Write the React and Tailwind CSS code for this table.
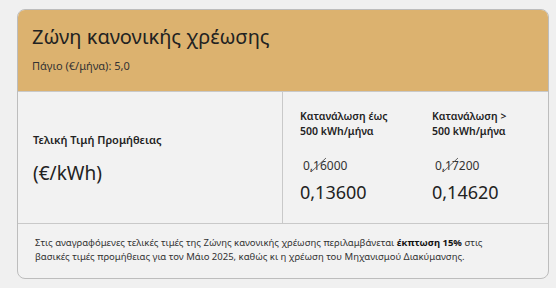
import React from 'react';

const font = { fontFamily: '"Noto Sans", "Open Sans", sans-serif' };

function OldPrice({ value }) {
  return (
    <div className="relative inline-block pl-[3px] text-[12px] text-[#333]">
      {value}
      {/* diagonal strike */}
      <svg className="absolute left-[10px] top-[-1px]" width="18" height="18" viewBox="0 0 18 18">
        <line x1="1" y1="16" x2="16" y2="2" stroke="#555" strokeWidth="0.9" />
      </svg>
    </div>
  );
}

function PriceCol({ title1, title2, oldPrice, newPrice }) {
  return (
    <div className="flex flex-col w-[132px] shrink-0">
      <div className="text-[10.5px] font-semibold leading-[15px] text-[#222]">
        <div>{title1}</div>
        <div>{title2}</div>
      </div>
      <div className="mt-[13px]">
        <OldPrice value={oldPrice} />
      </div>
      <div className="mt-[4px] text-[18px] leading-[24px] text-[#222]">{newPrice}</div>
    </div>
  );
}

export default function App() {
  return (
    <div className="w-[556px] h-[288px] bg-[#f0f0f0] pt-[9px] pl-[17px]" style={font}>
      <div className="w-[532px] rounded-[8px] border border-[#bdbdbd] overflow-hidden bg-[#f2f2f2]">
        {/* Header */}
        <div className="bg-[#dcb26f] px-[14px] pt-[13px] h-[82px] border-b border-[#c9c9c9]">
          <h1 className="text-[20px] leading-[28px] text-[#222]">Ζώνη κανονικής χρέωσης</h1>
          <p className="mt-[7px] text-[11px] text-[#333]">Πάγιο (€/μήνα): 5,0</p>
        </div>

        {/* Price table */}
        <div className="grid grid-cols-2 h-[132px] border-b border-[#c9c9c9]">
          <div className="border-r border-[#c9c9c9] pl-[15px] pt-[40px]">
            <p className="text-[11px] font-semibold text-[#222]">Τελική Τιμή Προμήθειας</p>
            <p className="mt-[10px] text-[19px] text-[#222]">(€/kWh)</p>
          </div>
          <div className="flex pl-[17px] pt-[17px]">
            <PriceCol
              title1="Κατανάλωση έως"
              title2="500 kWh/μήνα"
              oldPrice="0,16000"
              newPrice="0,13600"
            />
            <PriceCol
              title1="Κατανάλωση >"
              title2="500 kWh/μήνα"
              oldPrice="0,17200"
              newPrice="0,14620"
            />
          </div>
        </div>

        {/* Footnote */}
        <p className="pl-[17px] pr-[50px] pt-[12px] pb-[14px] text-[9.5px] leading-[14px] text-[#333]">
          Στις αναγραφόμενες τελικές τιμές της Ζώνης κανονικής χρέωσης περιλαμβάνεται <b className="text-[#111]">έκπτωση 15%</b> στις βασικές τιμές προμήθειας για τον Μάιο 2025, καθώς κι η χρέωση του Μηχανισμού Διακύμανσης.
        </p>
      </div>
    </div>
  );
}
